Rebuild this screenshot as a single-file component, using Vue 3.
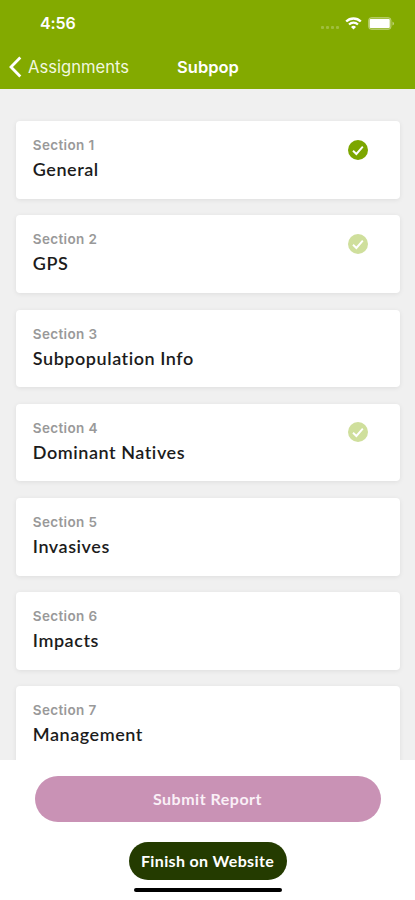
<script setup>
const sections = [
  { id: 1, title: 'General', state: 'done' },
  { id: 2, title: 'GPS', state: 'partial' },
  { id: 3, title: 'Subpopulation Info' },
  { id: 4, title: 'Dominant Natives', state: 'partial' },
  { id: 5, title: 'Invasives' },
  { id: 6, title: 'Impacts' },
  { id: 7, title: 'Management' },
]
</script>

<template>
  <div class="screen">
    <header class="header">
      <div class="status">
        <span class="time">4:56</span>
        <div class="indicators">
          <span class="signal"><i v-for="n in 4" :key="n"></i></span>
          <svg class="wifi" width="17" height="13" viewBox="0 0 17 13">
            <path d="M1.2 4.5a10.4 10.4 0 0 1 14.6 0" fill="none" stroke="#fff" stroke-width="2.4" />
            <path d="M4 7.5a6.4 6.4 0 0 1 9 0" fill="none" stroke="#fff" stroke-width="2.1" />
            <path d="M8.5 12.5 6 9.9a3.6 3.6 0 0 1 5 0z" fill="#fff" />
          </svg>
          <svg class="battery" width="27" height="13" viewBox="0 0 27 13">
            <rect x=".5" y=".5" width="22.6" height="12" rx="3" fill="#fff" fill-opacity=".25" stroke="#fff" stroke-opacity=".3" />
            <rect x="1.7" y="2" width="20" height="9" rx="1" fill="#fff" />
            <path d="M24.5 4.4c2 .8 2 3.4 0 4.2z" fill="#fff" fill-opacity=".5" />
          </svg>
        </div>
      </div>
      <nav class="nav">
        <button class="back">
          <svg width="13" height="22" viewBox="0 0 13 22">
            <path d="M11.3 1.5 2 11l9.3 9.5" fill="none" stroke="#fff" stroke-width="2.8" />
          </svg>
          <span>Assignments</span>
        </button>
        <h1>Subpop</h1>
      </nav>
    </header>

    <main class="list">
      <article v-for="s in sections" :key="s.id" class="card">
        <div>
          <p class="label">Section {{ s.id }}</p>
          <h2 class="title">{{ s.title }}</h2>
        </div>
        <svg v-if="s.state" class="check" :class="s.state" width="20" height="20" viewBox="0 0 20 20">
          <circle cx="10" cy="10" r="10" />
          <path d="M5 10.7 8.4 14 14.8 6.7" fill="none" stroke="#fff" stroke-width="1.9" />
        </svg>
      </article>
    </main>

    <footer class="footer">
      <button class="submit">Submit Report</button>
      <button class="finish">Finish on Website</button>
      <div class="home"></div>
    </footer>
  </div>
</template>

<style>
body {
  margin: 0;
}
</style>

<style scoped>
.screen {
  display: flex;
  flex-direction: column;
  width: 415px;
  height: 900px;
  overflow: hidden;
  background: #f0f0f0;
  font-family: Lato, "Liberation Sans", sans-serif;
}
button {
  border: 0;
  padding: 0;
  background: none;
  font: inherit;
}
h1, h2, p {
  margin: 0;
}
.header {
  flex: none;
  box-sizing: border-box;
  height: 88.6px;
  background: #83aa00;
  color: #fff;
  font-family: Inter, sans-serif;
}
.status {
  display: flex;
  justify-content: space-between;
  height: 46px;
  padding: 0 20.5px 0 40px;
  align-items: center;
}
.time {
  font-size: 16px;
  font-weight: 600;
  letter-spacing: -0.1px;
}
.indicators {
  display: flex;
  align-items: center;
}
.signal {
  display: flex;
  gap: 2px;
  margin: 8px 6px 0 0;
}
.signal i {
  width: 3px;
  height: 3px;
  border-radius: 1px;
  background: rgba(255, 255, 255, 0.24);
}
.wifi {
  margin-right: 6px;
}
.nav {
  display: grid;
  grid-template-columns: 145px 126px 1fr;
  align-items: center;
  height: 42px;
}
.back {
  display: flex;
  align-items: center;
  gap: 6px;
  padding-left: 9px;
  color: #f1f7df;
  font-size: 16.6px;
}
.nav h1 {
  font-size: 16.5px;
  font-weight: 600;
  text-align: center;
}
.list {
  flex: 1;
  min-height: 0;
  overflow: hidden;
  display: flex;
  flex-direction: column;
  gap: 16.3px;
  padding: 32.8px 15.5px 0 16.4px;
}
.card {
  flex: none;
  box-sizing: border-box;
  display: flex;
  justify-content: space-between;
  height: 77.8px;
  padding: 15px 32px 0 16.4px;
  border-radius: 4px;
  background: #fff;
  box-shadow: 0 1px 5px rgba(0, 0, 0, 0.08);
}
.label {
  color: #999;
  font-family: Inter, sans-serif;
  font-size: 13.5px;
  font-weight: 600;
  line-height: 18px;
  letter-spacing: 0.36px;
}
.title {
  margin-top: 3px;
  color: #1c1c1c;
  font-size: 18px;
  font-weight: 600;
  line-height: 24px;
  letter-spacing: 0.55px;
}
.check {
  margin-top: 3.6px;
}
.done {
  fill: #7ca600;
}
.partial {
  fill: #cfdf9c;
}
.footer {
  flex: none;
  box-sizing: border-box;
  display: flex;
  flex-direction: column;
  align-items: center;
  height: 140.3px;
  padding-top: 16.3px;
  background: #fff;
}
.submit {
  width: 346px;
  height: 46px;
  padding-bottom: 2px;
  border-radius: 23px;
  background: #c992b5;
  color: #faf0f7;
  font-size: 16px;
  font-weight: 700;
  letter-spacing: 0.5px;
}
.finish {
  width: 158px;
  height: 38px;
  margin-top: 20px;
  padding-bottom: 2px;
  border-radius: 19px;
  background: #243b00;
  color: #fff;
  font-size: 16px;
  font-weight: 700;
  letter-spacing: 0.35px;
}
.home {
  width: 148px;
  height: 4.5px;
  margin-top: 7.5px;
  border-radius: 3px;
  background: #000;
}
</style>
